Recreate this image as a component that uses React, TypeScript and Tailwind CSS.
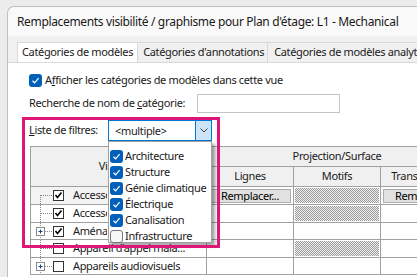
import React from 'react';

const font = { fontFamily: '"Noto Sans", "Open Sans", sans-serif', letterSpacing: '-0.35px' };

const BlueCheck: React.FC<{ checked?: boolean }> = ({ checked = true }) =>
    checked ? (
        <span className="w-[13px] h-[13px] rounded-[3px] bg-[#005fb8] flex items-center justify-center shrink-0">
            <svg width="9" height="9" viewBox="0 0 9 9">
                <path d="M1.5 4.8 L3.6 6.8 L7.6 2.2" stroke="white" strokeWidth="1.2" fill="none" />
            </svg>
        </span>
    ) : (
        <span className="w-[13px] h-[13px] rounded-[3px] border border-[#767676] bg-[#f7f7f7] shrink-0" />
    );

const ClassicCheck: React.FC<{ checked?: boolean }> = ({ checked }) => (
    <span className="w-[11px] h-[11px] border border-[#333333] bg-white flex items-center justify-center shrink-0">
        {checked && (
            <svg width="9" height="9" viewBox="0 0 9 9">
                <path d="M1.5 4 L3.5 6.5 L7.5 1.5" stroke="black" strokeWidth="1.6" fill="none" />
            </svg>
        )}
    </span>
);

const TreeLines: React.FC<{ plus?: boolean; first?: boolean; h: number }> = ({ plus, first, h }) => {
    const c = Math.floor(h / 2);
    return (
        <svg width="22" height={h} className="shrink-0">
            <line x1="9.5" y1={first ? c : 0} x2="9.5" y2={h} stroke="#888" strokeDasharray="1 1" />
            <line x1="10" y1={c + 0.5} x2="22" y2={c + 0.5} stroke="#888" strokeDasharray="1 1" />
            {plus && (
                <g>
                    <rect x="5.5" y={c - 3.5} width="8" height="8" fill="white" stroke="#8a8a8a" />
                    <line x1="7.5" y1={c + 0.5} x2="11.5" y2={c + 0.5} stroke="#1c3f94" />
                    <line x1="9.5" y1={c - 1.5} x2="9.5" y2={c + 2.5} stroke="#1c3f94" />
                </g>
            )}
        </svg>
    );
};

// rows under the open dropdown are clipped where the list covers them
const rows = [
    { label: 'Accessoires de canalisation', checked: true, plus: false, h: 18, hatch: true, btn: true, clip: true },
    { label: 'Accessoires de gaine', checked: true, plus: false, h: 18, hatch: true, btn: false, clip: true },
    { label: 'Aménagement paysager', checked: true, plus: true, h: 17, hatch: false, btn: false, clip: true },
    { label: "Appareil d'appel mala...", checked: false, plus: false, h: 18, hatch: true, btn: false, clip: false },
    { label: 'Appareils audiovisuels', checked: false, plus: true, h: 17, hatch: false, btn: false, clip: false },
];

const filters = ['Architecture', 'Structure', 'Génie climatique', 'Électrique', 'Canalisation', 'Infrastructure'];

const OverrideButton: React.FC = () => (
    <div className="mx-[2px] h-[14px] bg-[#e1e1e1] border border-[#adadad] flex items-center justify-center text-[11px] leading-none text-black overflow-hidden whitespace-nowrap">
        Remplacer...
    </div>
);

const App: React.FC = () => {
    return (
        <div className="w-[417px] h-[277px] overflow-hidden bg-[#ececec] pl-[7px] pt-[6px] relative text-[#1a1a1a]" style={font}>
            <div className="w-[430px] h-[271px] rounded-tl-[7px] border-l border-t border-[#bfbfbf] bg-[#f9f9f9] flex flex-col overflow-hidden">
                {/* Title */}
                <div className="h-[29px] flex items-center pl-[9px] text-[12px] whitespace-nowrap">
                    Remplacements visibilité / graphisme pour Plan d'étage: L1 - Mechanical
                </div>

                {/* Tabs */}
                <div className="h-[26px] flex items-end pl-[9px] bg-[#f0f0f0] text-[11px] whitespace-nowrap">
                    <div className="h-[20px] w-[122px] px-[4px] flex items-center bg-white border-l border-t border-r border-[#d9d9d9]">
                        Catégories de modèles
                    </div>
                    <div className="h-[20px] w-[130px] px-[5px] flex items-center border-t border-r border-[#d9d9d9]">
                        Catégories d'annotations
                    </div>
                    <div className="h-[20px] px-[6px] flex items-center border-t border-r border-[#d9d9d9]">
                        Catégories de modèles analytiques
                    </div>
                </div>

                {/* Content */}
                <div className="flex-1 bg-white border-t border-[#d9d9d9] pl-[21px] pt-[9px] text-[11px]">
                    <div className="h-[16px] flex items-center gap-[3px] whitespace-nowrap">
                        <BlueCheck />
                        <span>A<u>f</u>ficher les catégories de modèles dans cette vue</span>
                    </div>

                    <div className="mt-[6px] h-[19px] flex items-center">
                        <span className="w-[168px] whitespace-nowrap">Recherche de nom de <u>c</u>atégorie:</span>
                        <div className="w-[143px] h-[19px] border border-[#c4c4c4] bg-white" />
                    </div>

                    <div className="mt-[7px] h-[21px] flex items-center">
                        <span className="w-[79px] whitespace-nowrap"><u>L</u>iste de filtres:</span>
                        <div className="relative w-[104px] h-[21px] border border-[#0078d7] bg-white flex z-10">
                            <div className="flex-1 flex items-center pl-[6px] leading-none">&lt;multiple&gt;</div>
                            <div className="w-[16px] bg-[#cce4f7] border-l border-[#0078d7] flex items-center justify-center">
                                <svg width="8" height="5" viewBox="0 0 8 5">
                                    <path d="M0.5 0.5 L4 4 L7.5 0.5" stroke="#444" fill="none" />
                                </svg>
                            </div>
                            <div className="absolute left-[-1px] top-[20px] w-[104px] h-[102px] bg-white border border-[#a0a0a0] shadow-[3px_3px_3px_rgba(0,0,0,0.35)] pt-[6px] pl-[1px]">
                                {filters.map((f, i) => (
                                    <div key={f} className="h-[16px] flex items-center gap-[2px] whitespace-nowrap">
                                        <BlueCheck checked={i < 5} />
                                        <span>{f}</span>
                                    </div>
                                ))}
                            </div>
                        </div>
                    </div>

                    {/* Table */}
                    <div className="mt-[5px] ml-[1px] grid grid-cols-[176px_87px_87px_87px] border-l border-t border-[#a0a0a0] whitespace-nowrap">
                        <div className="row-span-2 bg-[#f0f0f0] border-r border-b border-[#a0a0a0] flex items-center justify-center">
                            Visibilité
                        </div>
                        <div className="col-span-3 h-[20px] bg-[#f0f0f0] border-r border-b border-[#a0a0a0] flex items-center justify-center">
                            Projection/Surface
                        </div>
                        <div className="h-[20px] bg-[#f0f0f0] border-r border-b border-[#a0a0a0] flex items-center justify-center">Lignes</div>
                        <div className="h-[20px] bg-[#f0f0f0] border-r border-b border-[#a0a0a0] flex items-center justify-center">Motifs</div>
                        <div className="h-[20px] bg-[#f0f0f0] border-r border-b border-[#a0a0a0] flex items-center justify-center">Transparence</div>

                        {rows.map((r, i) => (
                            <React.Fragment key={r.label}>
                                <div
                                    className={`border-r border-b border-[#a0a0a0] flex items-center overflow-hidden ${i === 0 ? 'bg-[#f3f3f3]' : 'bg-white'}`}
                                    style={{ height: r.h }}
                                >
                                    <TreeLines plus={r.plus} first={i === 0} h={r.h - 1} />
                                    <ClassicCheck checked={r.checked} />
                                    <span className={`ml-[9px] ${r.clip ? 'w-[34px] overflow-hidden' : ''}`}>{r.label}</span>
                                </div>
                                <div className="border-r border-b border-[#a0a0a0] flex flex-col justify-center" style={{ height: r.h }}>
                                    {r.btn && <OverrideButton />}
                                </div>
                                <div className="border-r border-b border-[#a0a0a0] p-[1px]" style={{ height: r.h }}>
                                    {r.hatch && (
                                        <div className="w-full h-full bg-[repeating-conic-gradient(#9c9c9c_0_25%,#ededed_0_50%)] bg-[length:2px_2px]" />
                                    )}
                                </div>
                                <div className="border-r border-b border-[#a0a0a0] flex flex-col justify-center" style={{ height: r.h }}>
                                    {r.btn && <OverrideButton />}
                                </div>
                            </React.Fragment>
                        ))}
                    </div>
                </div>
            </div>

            {/* Highlight annotation */}
            <div className="absolute left-[22px] top-[117px] w-[198px] h-[131px] border-[3px] border-[#dd1677] pointer-events-none z-20" />
        </div>
    );
};

export default App;
